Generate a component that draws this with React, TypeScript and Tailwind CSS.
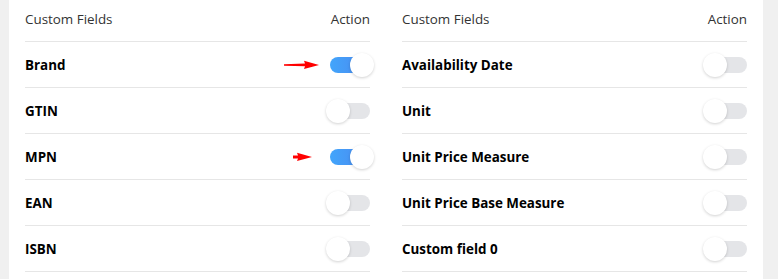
const left = [
  { name: "Brand", on: true, arrow: "long" },
  { name: "GTIN", on: false },
  { name: "MPN", on: true, arrow: "short" },
  { name: "EAN", on: false },
  { name: "ISBN", on: false },
];

const right = [
  { name: "Availability Date", on: false },
  { name: "Unit", on: false },
  { name: "Unit Price Measure", on: false },
  { name: "Unit Price Base Measure", on: false },
  { name: "Custom field 0", on: false },
];

type Field = { name: string; on: boolean; arrow?: string };

function Toggle({ on }: { on: boolean }) {
  return (
    <div
      className={`relative w-[40px] h-[16px] rounded-full ${
        on ? "bg-gradient-to-r from-[#42a5fb] to-[#4a87ee]" : "bg-[#e4e5e8]"
      }`}
    >
      <div
        className={`absolute top-[-4px] w-[24px] h-[24px] rounded-full bg-white shadow-[0_1px_3px_rgba(0,0,0,0.18)] ${
          on ? "right-[-4px]" : "left-[-4px]"
        }`}
      />
    </div>
  );
}

function Arrow({ kind }: { kind: string }) {
  if (kind === "long") {
    return (
      <svg width="36" height="10" viewBox="0 0 36 10" className="mr-[10px]">
        <path d="M0 4.2 L21 3.6 L20 0.8 L35 5 L20 9 L21 6.2 L0 5.8 Z" fill="#ff0000" />
      </svg>
    );
  }
  return (
    <svg width="20" height="10" viewBox="0 0 20 10" className="mr-[17px]">
      <path d="M0 3.6 L5 3.4 L4 0.8 L19 5 L4 9 L5 6.6 L0 6.4 Z" fill="#ff0000" />
    </svg>
  );
}

function Column({ rows }: { rows: Field[] }) {
  return (
    <div className="w-[345px]">
      <div className="h-[42px] flex items-center justify-between border-b border-[#e6e6e6] text-[13.4px] text-[#333] pb-[2px]">
        <span>Custom Fields</span>
        <span>Action</span>
      </div>
      {rows.map((r) => (
        <div
          key={r.name}
          className="h-[46px] flex items-center justify-between border-b border-[#e6e6e6]"
        >
          <span className="text-[13.4px] font-bold text-black mt-[2px]">{r.name}</span>
          <div className="flex items-center">
            {r.arrow && <Arrow kind={r.arrow} />}
            <Toggle on={r.on} />
          </div>
        </div>
      ))}
    </div>
  );
}

export default function App() {
  return (
    <div
      className="w-[778px] h-[279px] bg-[#f0f0f0] flex pl-[9px] overflow-hidden"
      style={{ fontFamily: '"Open Sans", "Noto Sans", sans-serif' }}
    >
      <div className="w-[754px] h-full bg-white flex gap-[32px] px-[16px]">
        <Column rows={left} />
        <Column rows={right} />
      </div>
    </div>
  );
}
